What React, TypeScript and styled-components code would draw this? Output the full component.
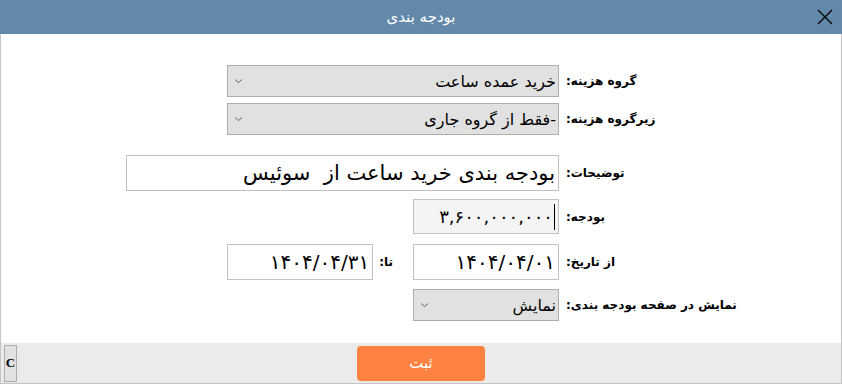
import React from 'react';
import styled, { createGlobalStyle } from 'styled-components';

const GlobalStyle = createGlobalStyle`
    html, body {
        margin: 0;
        padding: 0;
        background: #ffffff;
    }
    * {
        box-sizing: border-box;
    }
`;

const Window = styled.div`
    width: 842px;
    height: 384px;
    display: flex;
    flex-direction: column;
    font-family: 'DejaVu Sans', sans-serif;
    background: #ffffff;
`;

const TitleBar = styled.div`
    height: 34px;
    flex-shrink: 0;
    background: #6389aa;
    display: flex;
    align-items: center;
    justify-content: center;
    position: relative;
    color: #ffffff;
    font-size: 15px;
    direction: rtl;
`;

const CloseButton = styled.button`
    position: absolute;
    right: 8px;
    top: 8px;
    width: 18px;
    height: 18px;
    padding: 0;
    border: none;
    background: transparent;
    display: flex;
    align-items: center;
    justify-content: center;
`;

const Body = styled.div`
    flex: 1;
    display: flex;
    flex-direction: column;
    border-left: 1px solid #c4c4c4;
    border-right: 1px solid #c4c4c4;
    padding-top: 31px;
`;

const Row = styled.div<{ $top: number }>`
    display: grid;
    grid-template-columns: 558px auto;
    column-gap: 7px;
    align-items: center;
    margin-top: ${(p) => p.$top}px;
`;

const Fields = styled.div`
    display: flex;
    justify-content: flex-end;
    align-items: center;
`;

const Label = styled.label`
    direction: rtl;
    text-align: left;
    justify-self: start;
    font-size: 12px;
    font-weight: bold;
    color: #000000;
    white-space: nowrap;
`;

const InlineLabel = styled(Label)`
    margin: 0 20px 0 6px;
`;

const Select = styled.div<{ $width: number }>`
    width: ${(p) => p.$width}px;
    height: 32px;
    background: #e1e1e1;
    border: 1px solid #adadad;
    display: flex;
    align-items: center;
    justify-content: space-between;
    padding: 0 2px 0 6px;
    font-size: 16px;
    color: #000000;
`;

const SelectText = styled.span`
    direction: rtl;
    white-space: nowrap;
`;

const TextBox = styled.div<{ $width: number; $height: number; $size: number; $shade?: boolean }>`
    width: ${(p) => p.$width}px;
    height: ${(p) => p.$height}px;
    background: ${(p) => (p.$shade ? '#f4f4f4' : '#ffffff')};
    border: 1px solid #c2c2c2;
    display: flex;
    align-items: center;
    justify-content: flex-end;
    padding: 0 3px;
    font-size: ${(p) => p.$size}px;
    color: #000000;
    direction: ltr;
    white-space: nowrap;
`;

const Caret = styled.span`
    width: 1px;
    height: 26px;
    background: #000000;
    margin-left: 1px;
`;

const Footer = styled.div`
    height: 41px;
    flex-shrink: 0;
    background: #ebebeb;
    border: 1px solid #c4c4c4;
    border-top: none;
    display: flex;
    align-items: center;
    padding: 1px 2px;
`;

const ClearButton = styled.button`
    width: 13px;
    height: 37px;
    padding: 0;
    margin-left: 1px;
    background: #e1e1e1;
    border: 1px solid #adadad;
    font-family: 'Liberation Serif', serif;
    font-weight: bold;
    font-size: 13px;
    color: #000000;
`;

const SubmitButton = styled.button`
    width: 128px;
    height: 35px;
    margin-left: 340px;
    background: #ff8240;
    border: none;
    border-radius: 4px;
    color: #ffffff;
    font-family: 'DejaVu Sans', sans-serif;
    font-size: 15px;
`;

function Chevron() {
    return (
        <svg width="9" height="6" viewBox="0 0 9 6">
            <path d="M1 1.5 L4.5 4.5 L8 1.5" fill="none" stroke="#606060" strokeWidth="1" />
        </svg>
    );
}

export default function App(): JSX.Element {
    return (
        <>
            <GlobalStyle />
            <Window>
                <TitleBar>
                    بودجه بندی
                    <CloseButton aria-label="بستن">
                        <svg width="16" height="16" viewBox="0 0 16 16">
                            <path d="M1 1 L15 15 M15 1 L1 15" stroke="#000000" strokeWidth="1.4" />
                        </svg>
                    </CloseButton>
                </TitleBar>

                <Body>
                    <Row $top={0}>
                        <Fields>
                            <Select $width={332}>
                                <Chevron />
                                <SelectText>خرید عمده ساعت</SelectText>
                            </Select>
                        </Fields>
                        <Label>گروه هزینه:</Label>
                    </Row>
                    <Row $top={6}>
                        <Fields>
                            <Select $width={332}>
                                <Chevron />
                                <SelectText>-فقط از گروه جاری</SelectText>
                            </Select>
                        </Fields>
                        <Label>زیرگروه هزینه:</Label>
                    </Row>
                    <Row $top={20}>
                        <Fields>
                            <TextBox $width={433} $height={36} $size={21} dir="rtl">
                                بودجه بندی خرید ساعت از&nbsp; سوئیس
                            </TextBox>
                        </Fields>
                        <Label>توضیحات:</Label>
                    </Row>
                    <Row $top={8}>
                        <Fields>
                            <TextBox $width={146} $height={35} $size={18} $shade>
                                ۳,۶۰۰,۰۰۰,۰۰۰
                                <Caret />
                            </TextBox>
                        </Fields>
                        <Label>بودجه:</Label>
                    </Row>
                    <Row $top={10}>
                        <Fields>
                            <TextBox $width={146} $height={36} $size={20}>
                                ۱۴۰۴/۰۴/۳۱
                            </TextBox>
                            <InlineLabel>تا:</InlineLabel>
                            <TextBox $width={146} $height={36} $size={20}>
                                ۱۴۰۴/۰۴/۰۱
                            </TextBox>
                        </Fields>
                        <Label>از تاریخ:</Label>
                    </Row>
                    <Row $top={9}>
                        <Fields>
                            <Select $width={146}>
                                <Chevron />
                                <SelectText>نمایش</SelectText>
                            </Select>
                        </Fields>
                        <Label>نمایش در صفحه بودجه بندی:</Label>
                    </Row>
                </Body>

                <Footer>
                    <ClearButton>C</ClearButton>
                    <SubmitButton>ثبت</SubmitButton>
                </Footer>
            </Window>
        </>
    );
}
